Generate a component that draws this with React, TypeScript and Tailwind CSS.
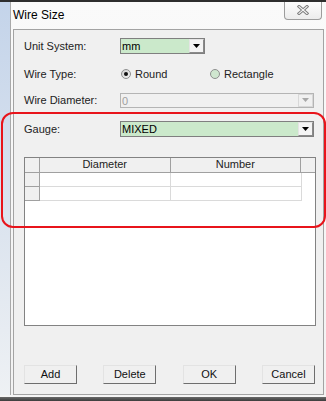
import React from 'react';

const font = { fontFamily: '"Liberation Sans", Arial, sans-serif' };

function Arrow({ color = '#000' }: { color?: string }) {
  return (
    <svg width="7" height="4" viewBox="0 0 7 4">
      <path d="M0 0 L7 0 L3.5 4 Z" fill={color} />
    </svg>
  );
}

function Combo({ value, width, green = true, disabled = false, height = 16 }: { value: string; width: number; green?: boolean; disabled?: boolean; height?: number }) {
  return (
    <div
      className={`flex border ${disabled ? 'border-[#b4b4b4] bg-[#f0f0f0]' : 'border-[#7f7f7f] bg-[#cbe9cb]'}`}
      style={{ width, height }}
    >
      <div className={`flex-1 pl-[1px] text-[11px] leading-[14px] ${disabled ? 'text-[#a0a0a0]' : 'text-black'}`}>{value}</div>
      <div
        className={`w-[15px] flex items-center justify-center border ${
          disabled ? 'border-[#d8d8d8] bg-[#f0f0f0]' : 'border-[#e4e4e4] border-r-[#8a8a8a] border-b-[#8a8a8a] bg-[#f4f4f4]'
        }`}
      >
        <Arrow color={disabled ? '#a8a8a8' : '#000'} />
      </div>
      {green ? null : null}
    </div>
  );
}

function Radio({ checked, label }: { checked: boolean; label: string }) {
  return (
    <div className="flex items-center gap-[4px]">
      <div
        className={`w-[10px] h-[10px] rounded-full border border-[#8e8f8f] flex items-center justify-center ${
          checked ? 'bg-gradient-to-br from-[#d0d0d0] to-[#f4f4f4]' : 'bg-[#cfe6cf]'
        }`}
      >
        {checked && <div className="w-[4px] h-[4px] rounded-full bg-[#111]" />}
      </div>
      <span className="text-[11px] text-[#222]">{label}</span>
    </div>
  );
}

function Btn({ label }: { label: string }) {
  return (
    <div className="w-[53px] h-[19px] flex items-center justify-center bg-[#f0f0f0] border border-t-[#e3e3e3] border-l-[#e3e3e3] border-r-[#6e6e6e] border-b-[#6e6e6e] text-[11px] text-[#111]">
      {label}
    </div>
  );
}

export default function App() {
  return (
    <div className="w-[326px] h-[401px] overflow-hidden relative bg-[#f5f5f5] flex flex-col" style={font}>
      <div className="h-[2px] bg-[#2e2e2e]" />
      <div className="h-[395px] flex">
        {/* desktop strip */}
        <div className="w-[10px] bg-gradient-to-b from-[#c4d4ea] via-[#d9e2ee] to-[#eef1f4]" />
        {/* window */}
        <div className="flex-1 border-l border-[#a9a9a9] bg-gradient-to-b from-[#fafafa] to-[#f2f2f2] flex flex-col">
          <div className="h-[27px] flex justify-between items-start">
            <div className="pl-[2px] pt-[6px] text-[12px] leading-[14px] text-black">Wire Size</div>
            <div className="mr-[4px] w-[38px] h-[18px] border border-t-0 border-[#9c9c9c] rounded-b-[4px] bg-gradient-to-b from-[#fdfdfd] to-[#ececec] flex items-center justify-center">
              <svg width="12" height="10" viewBox="0 0 12 10">
                <path d="M2 1.5 L10 8.5 M10 1.5 L2 8.5" stroke="#7c7c7c" strokeWidth="3" strokeLinecap="square" />
                <path d="M2 1.5 L10 8.5 M10 1.5 L2 8.5" stroke="#f6f6f6" strokeWidth="1.1" strokeLinecap="square" />
              </svg>
            </div>
          </div>
          {/* panel */}
          <div className="ml-[2px] w-[311px] h-[366px] border border-[#a3a3a3] bg-[#f0f0f0] flex flex-col pl-[10px]">
            <div className="mt-[8px] flex items-center h-[16px]">
              <div className="w-[96px] text-[11px] text-[#222]">Unit System:</div>
              <Combo value="mm" width={85} />
            </div>
            <div className="mt-[12px] flex items-center h-[16px]">
              <div className="w-[97px] text-[11px] text-[#222]">Wire Type:</div>
              <div className="w-[89px]">
                <Radio checked label="Round" />
              </div>
              <Radio checked={false} label="Rectangle" />
            </div>
            <div className="mt-[11px] flex items-center h-[15px]">
              <div className="w-[96px] text-[11px] text-[#222]">Wire Diameter:</div>
              <Combo value="0" width={194} height={15} disabled />
            </div>
            <div className="mt-[13px] flex items-center h-[16px]">
              <div className="w-[96px] text-[11px] text-[#222]">Gauge:</div>
              <Combo value="MIXED" width={194} />
            </div>
            {/* grid */}
            <div className="mt-[20px] w-[292px] h-[169px] border border-[#828282] bg-white flex flex-col text-[11px] text-[#222]">
              <div className="flex h-[15px]">
                <div className="w-[15px] bg-[#f0f0f0] border-r border-b border-[#a0a0a0]" />
                <div className="w-[131px] bg-[#f0f0f0] border-r border-b border-[#a0a0a0] flex items-center justify-center leading-[13px]">Diameter</div>
                <div className="w-[131px] bg-[#f0f0f0] border-r border-b border-[#a0a0a0] flex items-center justify-center leading-[13px]">Number</div>
                <div className="w-[14px] bg-[#f0f0f0] border-b border-[#a0a0a0]" />
              </div>
              {[0, 1].map((r) => (
                <div key={r} className="flex h-[14px]">
                  <div className="w-[15px] bg-[#f0f0f0] border-r border-b border-[#a0a0a0]" />
                  <div className="w-[131px] border-r border-b border-[#dadada]" />
                  <div className="w-[131px] border-r border-b border-[#dadada]" />
                </div>
              ))}
            </div>
            <div className="mt-[39px] w-[291px] flex justify-between">
              <Btn label="Add" />
              <Btn label="Delete" />
              <Btn label="OK" />
              <Btn label="Cancel" />
            </div>
          </div>
        </div>
      </div>
      <div className="h-[2px]" />
      <div className="h-[4px] bg-gradient-to-b from-[#6a6a6a] to-[#3c3c3c]" />
      {/* red annotation */}
      <div className="absolute left-[1px] top-[112px] w-[325px] h-[116px] border-2 border-[#e8141b] rounded-[12px] pointer-events-none" />
    </div>
  );
}
